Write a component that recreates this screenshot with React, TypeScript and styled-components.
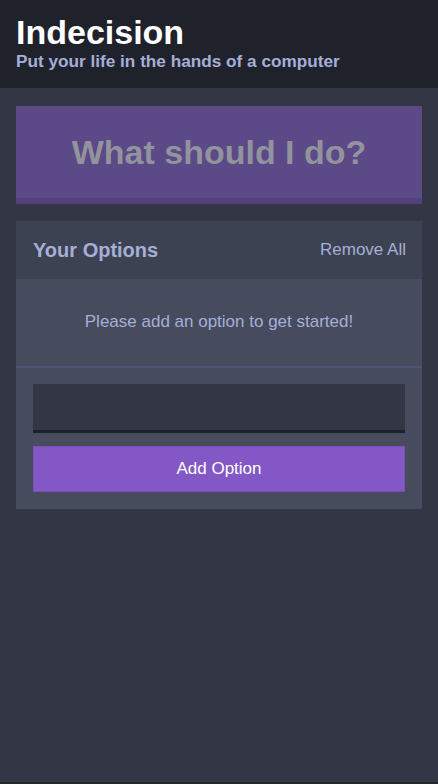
import React from "react";
import styled, { createGlobalStyle } from "styled-components";

const GlobalStyle = createGlobalStyle`
  html { background: #26262a; }
  body {
    margin: 0;
    font-family: "Liberation Sans", Arial, sans-serif;
  }
  * { box-sizing: border-box; }
`;

const Page = styled.div`
  height: 782px;
  background: #333745;
  display: flex;
  flex-direction: column;
`;

const Header = styled.header`
  background: #20222b;
  padding: 13px 16px 17px;
`;

const Title = styled.h1`
  margin: 0;
  color: #ffffff;
  font-size: 34px;
  font-weight: bold;
  line-height: 39px;
`;

const Subtitle = styled.h2`
  margin: 0;
  color: #a5afd7;
  font-size: 17.2px;
  font-weight: bold;
  line-height: 19px;
`;

const Container = styled.main`
  padding: 18px 16px 0;
  display: flex;
  flex-direction: column;
  gap: 17px;
`;

const BigButton = styled.button`
  width: 100%;
  height: 98px;
  border: none;
  border-bottom: 6px solid #533f7c;
  background: #5c4987;
  color: #91939d;
  font-family: "Liberation Sans", Arial, sans-serif;
  font-size: 34px;
  font-weight: bold;
  padding: 0;
  cursor: default;
`;

const Widget = styled.section`
  background: #464b5e;
`;

const WidgetHeader = styled.div`
  height: 58px;
  background: #3c4251;
  display: flex;
  align-items: center;
  justify-content: space-between;
  padding: 0 16px 0 17px;
`;

const WidgetTitle = styled.h3`
  margin: 0;
  color: #a5afd7;
  font-size: 20px;
  font-weight: bold;
`;

const LinkButton = styled.button`
  background: none;
  border: none;
  padding: 0;
  color: #a5afd7;
  font-family: "Liberation Sans", Arial, sans-serif;
  font-size: 17px;
`;

const Message = styled.p`
  margin: 0;
  padding: 33px 16px 34px;
  line-height: 20px;
  text-align: center;
  color: #a5afd7;
  font-size: 17px;
  border-bottom: 2px solid #4f5570;
`;

const Form = styled.form`
  display: flex;
  flex-direction: column;
  gap: 13px;
  padding: 16px 17px 17px;
`;

const Input = styled.input`
  height: 49px;
  width: 100%;
  background: #333745;
  border: none;
  border-bottom: 3px solid #20222b;
  outline: none;
  padding: 0 12px;
  color: #a5afd7;
  font-family: "Liberation Sans", Arial, sans-serif;
  font-size: 17px;
`;

const Button = styled.button`
  height: 46px;
  width: 100%;
  background: #8357c5;
  border: 1px solid #7a4fb8;
  color: #ffffff;
  font-family: "Liberation Sans", Arial, sans-serif;
  font-size: 17px;
  padding: 0;
`;

export default function App() {
  return (
    <>
      <GlobalStyle />
      <Page>
        <Header>
          <Title>Indecision</Title>
          <Subtitle>Put your life in the hands of a computer</Subtitle>
        </Header>
        <Container>
          <BigButton disabled>What should I do?</BigButton>
          <Widget>
            <WidgetHeader>
              <WidgetTitle>Your Options</WidgetTitle>
              <LinkButton>Remove All</LinkButton>
            </WidgetHeader>
            <Message>Please add an option to get started!</Message>
            <Form onSubmit={(e) => e.preventDefault()}>
              <Input type="text" name="option" />
              <Button type="submit">Add Option</Button>
            </Form>
          </Widget>
        </Container>
      </Page>
    </>
  );
}
